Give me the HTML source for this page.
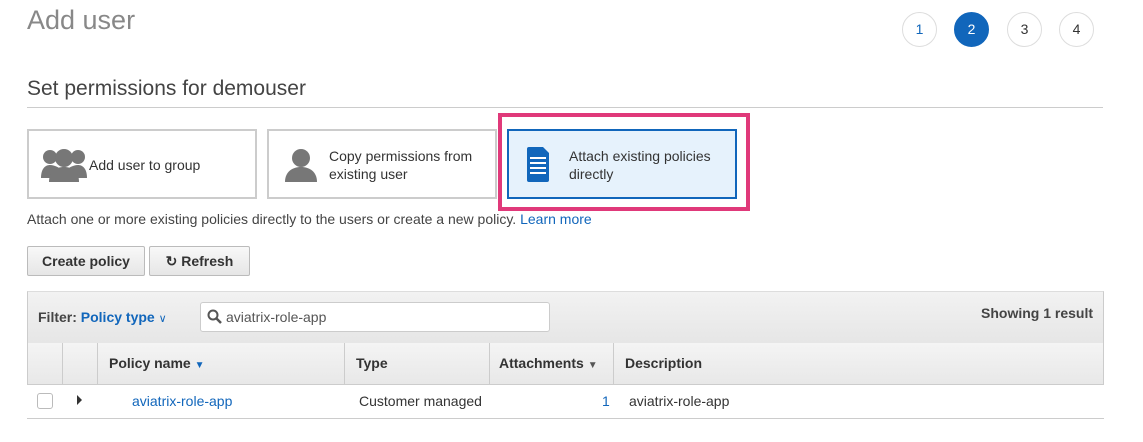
<!DOCTYPE html><html><head><style>
body{margin:0;width:1143px;height:442px;background:#fff;font-family:"Liberation Sans",Arial,sans-serif;position:relative;overflow:hidden;color:#333}
.a{position:absolute}
.c{position:absolute;top:12px;width:33px;height:33px;border:1px solid #ddd;border-radius:50%;text-align:center;line-height:33px;font-size:14px;color:#16b}
.box{position:absolute;top:129px;width:226px;height:66px;border:2px solid #ccc;background:#fff;font-size:14px;color:#333}
.btn{position:absolute;top:246px;height:28px;border:1px solid #bbb;border-radius:2px;background:linear-gradient(#f8f8f8,#e6e6e6);font-weight:bold;font-size:14px;line-height:28px;text-align:center;color:#333}
.th{position:absolute;top:343px;height:41px;border-right:1px solid #ccc;font-weight:bold;font-size:14px;line-height:41px;padding-left:11px;box-sizing:border-box}
</style></head><body>
<div class="a" style="left:27px;top:5px;font-size:27px;color:#888">Add user</div>
<div class="c" style="left:902px">1</div>
<div class="c" style="left:954px;background:#1166bb;border-color:#1166bb;color:#fff">2</div>
<div class="c" style="left:1007px;color:#333">3</div>
<div class="c" style="left:1059px;color:#333">4</div>
<div class="a" style="left:27px;top:77px;font-size:21px;color:#444">Set permissions for demouser</div>
<div class="a" style="left:27px;top:107px;width:1076px;height:1px;background:#ccc"></div>

<div class="box" style="left:27px"><svg class="a" style="left:12px;top:17px" width="46" height="34" viewBox="0 0 46 34"><g fill="#777"><circle cx="9" cy="9" r="7"/><circle cx="37" cy="9" r="7"/><path d="M0 30c0-9 4-13 9-13s9 3 9 3v10z"/><path d="M46 30c0-9-4-13-9-13s-9 3-9 3v10z"/><circle cx="23" cy="10" r="9"/><path d="M8 34c0-10 6-15 15-15s15 5 15 15z"/></g></svg><span class="a" style="left:60px;top:26px">Add user to group</span></div>
<div class="box" style="left:267px"><svg class="a" style="left:16px;top:17px" width="32" height="34" viewBox="0 0 32 34"><g fill="#777"><circle cx="16" cy="10" r="9"/><path d="M0 34c0-10 7-15 16-15s16 5 16 15z"/></g></svg><span class="a" style="left:60px;top:16px;line-height:18px">Copy permissions from<br>existing user</span></div>
<div class="a" style="left:498px;top:113px;width:244px;height:90px;border:4px solid #e0397a"></div>
<div class="box" style="left:507px;border-color:#1166bb;background:#e6f2fc"><svg class="a" style="left:18px;top:16px" width="22" height="35" viewBox="0 0 22 35"><path d="M2 0h14l6 6v27a2 2 0 0 1-2 2H2a2 2 0 0 1-2-2V2a2 2 0 0 1 2-2z" fill="#1166bb"/><g fill="#fff"><rect x="3" y="10" width="16" height="2"/><rect x="3" y="15" width="16" height="2"/><rect x="3" y="20" width="16" height="2"/><rect x="3" y="25" width="16" height="2"/></g></svg><span class="a" style="left:60px;top:16px;line-height:18px">Attach existing policies<br>directly</span></div>

<div class="a" style="left:27px;top:211px;font-size:14px;color:#444">Attach one or more existing policies directly to the users or create a new policy. <span style="color:#16b">Learn more</span></div>
<div class="btn" style="left:27px;width:116px">Create policy</div>
<div class="btn" style="left:149px;width:99px">&#x21BB; Refresh</div>

<div class="a" style="left:27px;top:291px;width:1075px;height:92px;border:1px solid #ccc;border-top-color:#ddd"></div>
<div class="a" style="left:27px;top:418px;width:1077px;height:1px;background:#ccc"></div>
<div class="a" style="left:28px;top:292px;width:1075px;height:51px;background:linear-gradient(#f2f2f2,#e6e6e6);border-bottom:1px solid #ccc"></div>
<div class="a" style="left:38px;top:309px;font-size:14px;font-weight:bold;color:#444">Filter: <span style="color:#1166bb">Policy type</span> <span style="color:#1166bb;font-weight:normal;font-size:11px">&#x2228;</span></div>
<div class="a" style="left:200px;top:302px;width:348px;height:28px;border:1px solid #ccc;border-radius:3px;background:#fff"><svg class="a" style="left:6px;top:6px" width="15" height="15"><circle cx="6" cy="6" r="4.5" stroke="#555" stroke-width="2" fill="none"/><path d="M9 9l5 5" stroke="#555" stroke-width="2.5"/></svg><span class="a" style="left:25px;top:6px;font-size:14px;color:#555">aviatrix-role-app</span></div>
<div class="a" style="left:981px;top:305px;font-size:14px;font-weight:bold;color:#444">Showing 1 result</div>
<div class="a" style="left:28px;top:343px;width:1075px;height:41px;background:linear-gradient(#f4f4f4,#e8e8e8);border-bottom:1px solid #ccc"></div>
<div class="th" style="left:28px;width:35px"></div>
<div class="th" style="left:63px;width:35px"></div>
<div class="th" style="left:98px;width:247px">Policy name <span style="color:#1166bb;font-size:10px">&#9660;</span></div>
<div class="th" style="left:345px;width:145px">Type</div>
<div class="th" style="left:490px;width:124px;padding-left:9px">Attachments <span style="color:#555;font-size:10px">&#9660;</span></div>
<div class="th" style="left:614px;width:489px;border:none">Description</div>
<div class="a" style="left:37px;top:393px;width:14px;height:14px;border:1px solid #bbb;border-radius:3px"></div>
<div class="a" style="left:77px;top:395px;width:0;height:0;border-left:5px solid #333;border-top:5px solid transparent;border-bottom:5px solid transparent"></div>
<div class="a" style="left:132px;top:393px;font-size:14px;color:#16b">aviatrix-role-app</div>
<div class="a" style="left:359px;top:393px;font-size:14px">Customer managed</div>
<div class="a" style="left:602px;top:393px;font-size:14px;color:#16b">1</div>
<div class="a" style="left:629px;top:393px;font-size:14px">aviatrix-role-app</div>
</body></html>
